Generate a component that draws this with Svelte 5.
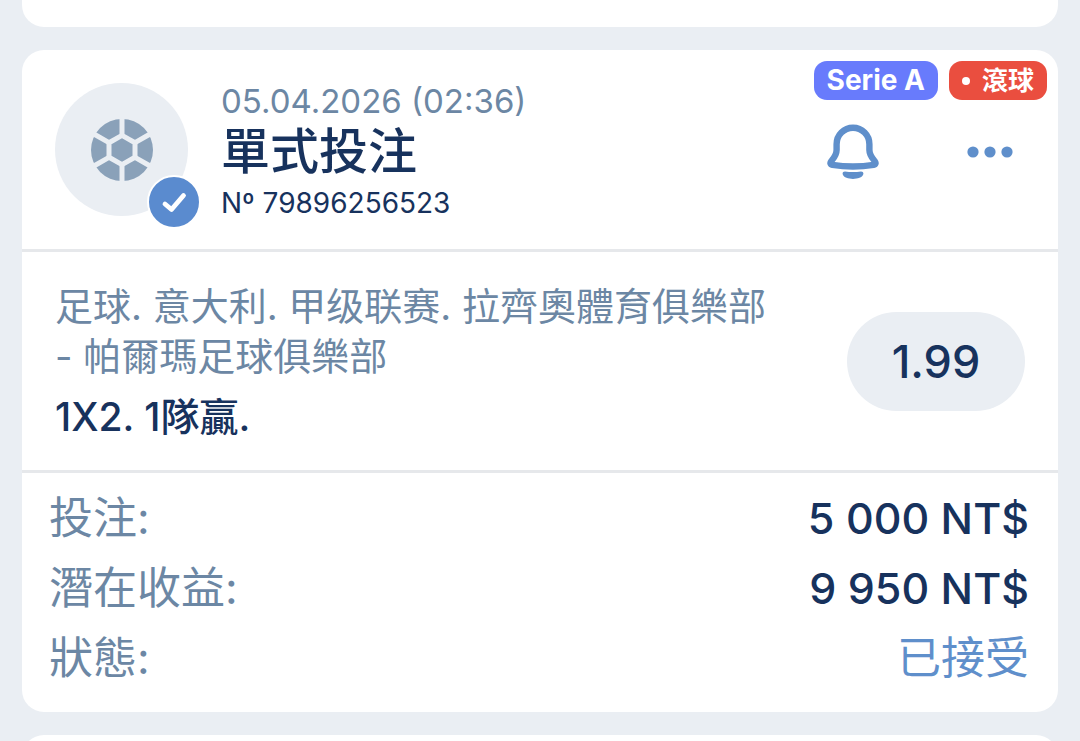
<script lang="ts">
	interface Bet {
		date: string;
		type: string;
		number: string;
		league: string;
		event: string;
		market: string;
		odds: string;
	}

	const bet: Bet = {
		date: '05.04.2026 (02:36)',
		type: '單式投注',
		number: '79896256523',
		league: 'Serie A',
		event: '足球. 意大利. 甲级联赛. 拉齊奧體育俱樂部 - 帕爾瑪足球俱樂部',
		market: '1X2. 1隊贏.',
		odds: '1.99'
	};

	const summary = [
		{ label: '投注:', value: '5 000 NT$', accent: false },
		{ label: '潛在收益:', value: '9 950 NT$', accent: false },
		{ label: '狀態:', value: '已接受', accent: true }
	];

	let subscribed = $state(false);
</script>

<main class="feed">
	<div class="card card-prev"></div>

	<article class="card bet">
		<div class="tags">
			<span class="tag league">{bet.league}</span>
			<span class="tag live"><i class="live-dot"></i>滾球</span>
		</div>

		<header class="bet-header">
			<div class="avatar">
				<svg class="ball" viewBox="0 0 62 62" aria-hidden="true">
					<circle cx="31" cy="31" r="31" fill="#8aa1b9" />
					<g fill="none" stroke="#eaeef3" stroke-width="5">
						<path d="M31 16.4 44 23.7V38.3L31 45.6 18 38.3V23.7Z" stroke-linejoin="round" />
						<path d="M31 16V-2M44 23.7 60 14.5M44 38.3 60 47.5M31 46V64M18 38.3 2 47.5M18 23.7 2 14.5" />
					</g>
				</svg>
				<span class="check">
					<svg viewBox="0 0 50 50" aria-hidden="true">
						<path d="M16 27 22.5 32.5 34.5 18.5" fill="none" stroke="#fff" stroke-width="4.8" stroke-linecap="round" stroke-linejoin="round" />
					</svg>
				</span>
			</div>

			<div class="info">
				<time class="date">{bet.date}</time>
				<h2>{bet.type}</h2>
				<div class="number">Nº {bet.number}</div>
			</div>

			<div class="actions">
				<button class="icon-button" aria-label="通知" aria-pressed={subscribed} onclick={() => (subscribed = !subscribed)}>
					<svg width="52" height="56" viewBox="0 0 52 56" aria-hidden="true">
						<path
							d="M9.6 20.2A16.4 16.4 0 0 1 42.4 20.2V26C42.4 31 45.4 34.4 47.6 37C49.2 39 48.8 40.4 46.6 40.8C34 42.8 18 42.8 5.4 40.8C3.2 40.4 2.8 39 4.4 37C6.6 34.4 9.6 31 9.6 26Z"
							fill="none"
							stroke="currentColor"
							stroke-width="6.4"
							stroke-linejoin="round"
						/>
						<path d="M18 47.4Q26 48.6 34 47.4C36 47.4 36.8 48.8 36.2 50.6C34.4 56.4 17.6 56.4 15.8 50.6C15.2 48.8 16 47.4 18 47.4Z" fill="currentColor" />
					</svg>
				</button>
				<button class="icon-button" aria-label="更多">
					<svg width="46" height="12" viewBox="0 0 46 12" fill="currentColor" aria-hidden="true">
						<circle cx="6" cy="6" r="5.6" />
						<circle cx="23" cy="6" r="5.6" />
						<circle cx="40" cy="6" r="5.6" />
					</svg>
				</button>
			</div>
		</header>

		<section class="event">
			<div class="event-text">
				<p class="event-name">{bet.event}</p>
				<p class="market">{bet.market}</p>
			</div>
			<span class="odds">{bet.odds}</span>
		</section>

		<dl class="summary">
			{#each summary as row}
				<div class="row">
					<dt>{row.label}</dt>
					<dd class:accent={row.accent}>{row.value}</dd>
				</div>
			{/each}
		</dl>
	</article>

	<div class="card card-next"></div>
</main>

<style>
	:global(body) {
		background: #eaeef3;
	}

	.feed {
		box-sizing: border-box;
		height: 100vh;
		padding: 0 22px;
		display: flex;
		flex-direction: column;
		gap: 23px;
		overflow: hidden;
		color: #17325d;
		font-family: Inter, 'Noto Sans CJK TC', sans-serif;
	}

	.card {
		flex-shrink: 0;
		background: #fff;
		border-radius: 22px;
	}

	.card-prev {
		padding-top: 27px;
		border-radius: 0 0 22px 22px;
	}

	.card-next {
		flex-grow: 1;
		padding-top: 33px;
		border-radius: 22px 22px 0 0;
	}

	.bet {
		position: relative;
	}

	.tags {
		position: absolute;
		top: 11px;
		right: 11px;
		display: flex;
		gap: 11px;
	}

	.tag {
		display: flex;
		align-items: center;
		gap: 12px;
		padding: 0 13px;
		border-radius: 13px;
		color: #fff;
		font-size: 28px;
		font-weight: 700;
		line-height: 39px;
	}

	.league {
		background: #687bfc;
	}

	.live {
		background: #ea4e3f;
		font-size: 26px;
	}

	.live-dot {
		width: 8px;
		height: 8px;
		border-radius: 50%;
		background: #fff;
	}

	.bet-header {
		display: flex;
		align-items: flex-start;
		padding: 33px 33px 26px;
		border-bottom: 3px solid #e6e8eb;
	}

	.avatar {
		position: relative;
		display: flex;
		align-items: center;
		justify-content: center;
		width: 133px;
		height: 133px;
		border-radius: 50%;
		background: #eaeef3;
	}

	.ball {
		width: 62px;
		height: 62px;
	}

	.check {
		position: absolute;
		right: -13px;
		bottom: -13px;
		width: 50px;
		height: 50px;
		border: 2px solid #fff;
		border-radius: 50%;
		background: #5a8bcf;
	}

	.check svg {
		display: block;
	}

	.info {
		flex: 1;
		margin-left: 33px;
	}

	.date {
		display: block;
		color: #6c87a4;
		font-size: 33px;
		line-height: 36px;
	}

	h2 {
		margin: 0;
		font-size: 49px;
		font-weight: 500;
		line-height: 65px;
	}

	.number {
		font-size: 28px;
		line-height: 39px;
	}

	.actions {
		display: flex;
		align-items: center;
		gap: 88px;
		margin: 41px 12px 0 0;
	}

	.icon-button {
		display: flex;
		padding: 0;
		border: none;
		background: none;
		color: #5f8fcb;
		cursor: pointer;
	}

	.event {
		display: flex;
		align-items: center;
		justify-content: space-between;
		gap: 72px;
		padding: 29px 33px 28px;
		border-bottom: 3px solid #e6e8eb;
	}

	.event-text {
		flex: 1;
		font-size: 38px;
		line-height: 50px;
	}

	.event-text p {
		margin: 0;
	}

	.event-name {
		color: #6c87a4;
	}

	.event-text .market {
		margin-top: 11px;
		font-size: 39px;
		font-weight: 500;
	}

	.odds {
		width: 178px;
		border-radius: 50px;
		background: #eaeef3;
		font-size: 45px;
		font-weight: 500;
		line-height: 99px;
		text-align: center;
	}

	.summary {
		margin: 0;
		padding: 10px 29px 19px 27px;
		font-size: 44px;
		line-height: 70px;
	}

	.row {
		display: flex;
		justify-content: space-between;
	}

	dt {
		color: #6c87a4;
	}

	dd {
		margin: 0;
		font-size: 43px;
		font-weight: 500;
	}

	.accent {
		color: #5f8fcb;
		font-size: 44px;
		font-weight: 400;
	}
</style>
